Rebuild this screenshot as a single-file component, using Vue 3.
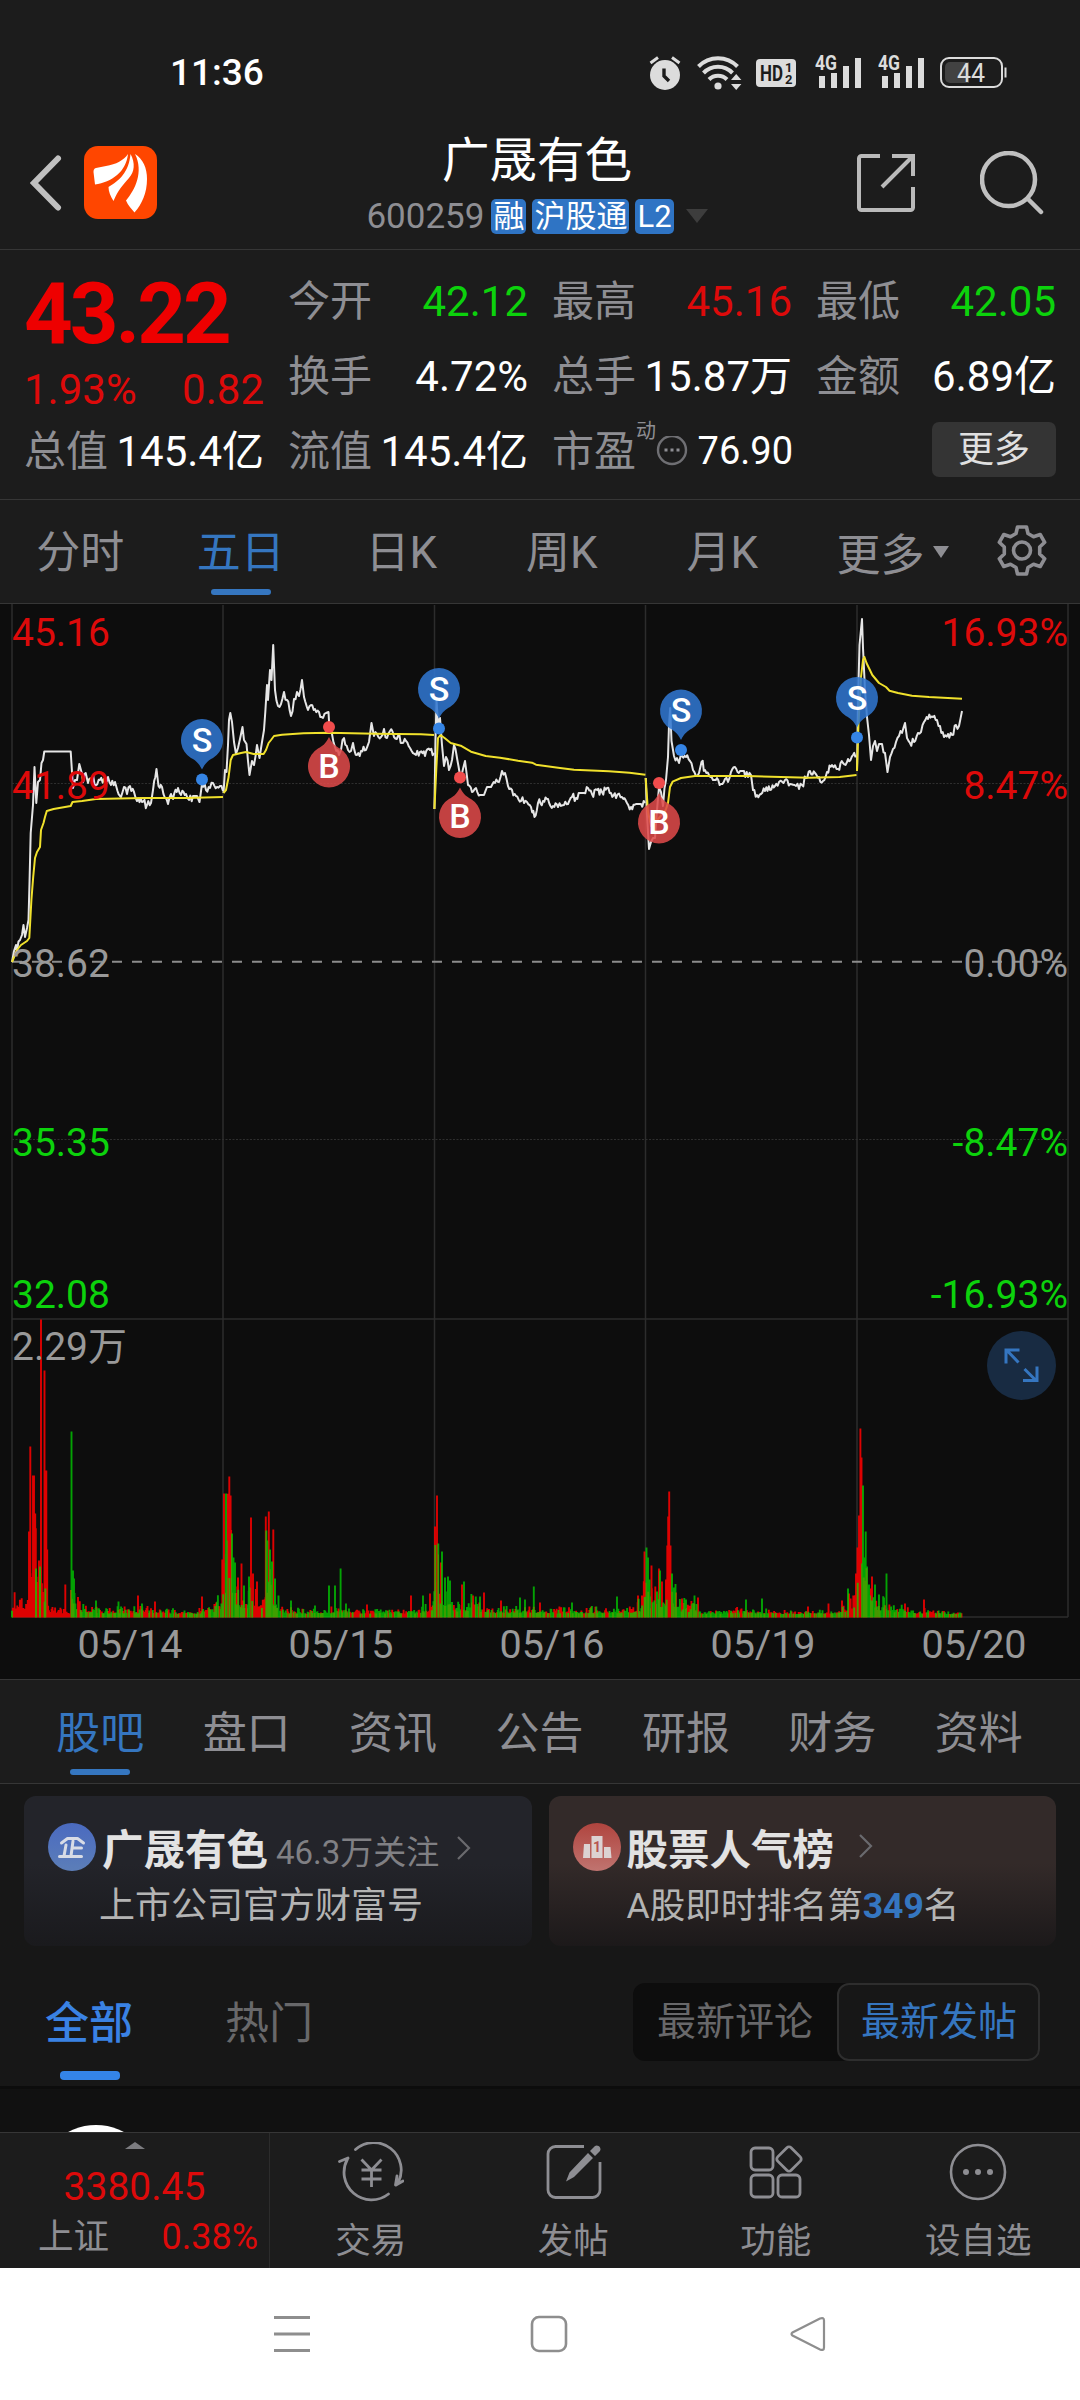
<script setup>
const quotes = [
  { label: '今开', value: '42.12', tone: 'down' },
  { label: '最高', value: '45.16', tone: 'up' },
  { label: '最低', value: '42.05', tone: 'down' },
  { label: '换手', value: '4.72%' },
  { label: '总手', value: '15.87万' },
  { label: '金额', value: '6.89亿' },
  { label: '总值', value: '145.4亿' },
  { label: '流值', value: '145.4亿' },
]

const periods = ['分时', '五日', '日K', '周K', '月K']
const sections = ['股吧', '盘口', '资讯', '公告', '研报', '财务', '资料']

// chart geometry
const left = 12
const right = 1068
const volBase = 1617
const dayLines = [223, 434.5, 645.5, 857]

const priceLabels = [
  { y: 646, price: '45.16', pct: '16.93%', tone: 'up' },
  { y: 799, price: '41.89', pct: '8.47%', tone: 'up' },
  { y: 977, price: '38.62', pct: '0.00%', tone: 'flat' },
  { y: 1156, price: '35.35', pct: '-8.47%', tone: 'down' },
  { y: 1308, price: '32.08', pct: '-16.93%', tone: 'down' },
]

const dates = [
  { x: 130, text: '05/14' },
  { x: 341, text: '05/15' },
  { x: 552, text: '05/16' },
  { x: 763, text: '05/19' },
  { x: 974, text: '05/20' },
]

const marks = [
  { x: 202, y: 779.5, type: 'S' },
  { x: 329, y: 727, type: 'B' },
  { x: 439, y: 728.5, type: 'S' },
  { x: 460, y: 777.5, type: 'B' },
  { x: 681, y: 750, type: 'S' },
  { x: 659, y: 783, type: 'B' },
  { x: 857, y: 737.5, type: 'S' },
]

function createRandom(seed) {
  let s = seed
  return () => {
    s = (s * 16807) % 2147483647
    return s / 2147483647
  }
}

const priceDays = [
  [
    12, 962, 14, 951, 16, 945, 17, 951, 20, 940, 22, 935, 23.5, 925, 25, 937, 27, 928, 28.5, 920, 29.5, 883,
    30.7, 833, 33, 805, 34.5, 767, 36.3, 803, 38, 782, 40, 780, 41.5, 763, 43, 760, 44.3, 751.5, 70.7, 751.5,
    73, 788, 75, 780, 77, 780, 79.3, 764, 81.5, 772, 83, 782, 85.7, 773, 88, 783, 92, 778, 96, 785, 100, 780,
    108, 777, 111, 785, 115, 782, 117.5, 791, 121, 797, 124, 787, 127, 794, 130, 786, 134, 792, 137, 801,
    142, 802, 147, 805, 151, 803, 153, 790, 156.5, 769, 158.5, 786, 162, 787, 165, 798, 168, 804, 171, 794,
    173, 799, 178, 788, 181, 795, 186, 794, 189, 800, 193, 796, 197, 796, 199.5, 802, 202, 784, 206, 790,
    210, 788, 213, 783, 217, 787, 223, 791,
  ],
  [
    223.5, 793, 225, 770, 226.5, 772, 228, 745, 229, 720, 230.3, 713, 232, 722, 234, 742, 236, 754, 238, 748,
    240, 739, 242.5, 727, 244, 740, 246.5, 744, 249.5, 775, 252, 761, 254, 765, 257, 745, 259.5, 758, 262, 742,
    264, 730, 265.3, 712, 267, 685, 268, 700, 270, 670, 271.5, 680, 273.2, 645, 275, 690, 278, 706, 281, 704,
    284, 692, 287, 700, 291, 716, 294, 699, 297, 692, 299, 696, 302, 680, 304, 697, 308, 710, 311, 705, 315, 709,
    319, 712, 323, 718, 326, 713, 328.5, 712, 329.5, 730, 332, 734, 335, 747, 339, 755, 341, 750, 344, 738,
    348, 750, 351, 751, 353, 743, 357, 755, 361, 751, 366, 750, 369, 742, 371.5, 723, 374, 736, 377, 734,
    381, 737, 384, 729, 387, 738, 390, 731, 394, 737, 398, 736, 402, 743, 406, 741, 410, 748, 416, 755, 420, 752,
    425, 756, 430, 750, 434, 753,
  ],
  [
    434.4, 809, 435.5, 740, 436.5, 700, 438, 724, 440, 718, 442, 745, 444, 766, 446, 757, 449, 770, 452, 760,
    454, 745, 457, 758, 460, 775, 463, 769, 465, 761, 468, 785, 472, 792, 476, 788, 480, 795, 484, 795, 487, 787,
    491, 787, 495, 783, 499, 782, 502, 771, 505, 773, 508, 786, 512, 790, 516, 796, 521, 801, 527, 802, 531, 807,
    534.5, 817, 538, 803, 543, 801, 548, 799, 553, 806, 558, 807, 564, 805, 568, 804, 572, 797, 576, 798, 580, 793,
    584, 793, 588, 788, 592, 794, 597, 790, 602, 792, 607, 788, 611, 793, 616, 798, 622, 797, 627, 803, 631, 807,
    636, 804, 641, 804, 645, 803,
  ],
  [
    645.7, 778, 647, 815, 649, 849, 651, 842, 653, 838, 655, 838, 657, 810, 659, 787, 661, 792, 663, 806,
    664.5, 788, 666, 780, 668, 757, 669, 725, 670.2, 708, 671.5, 741, 674, 756, 677, 758, 679, 763, 682, 756,
    686, 757, 690, 761, 693, 770, 696, 776, 699, 773, 701.5, 762, 705, 770, 709, 775, 713, 780, 717, 778,
    721, 784, 725, 779, 728, 782, 731, 772, 735, 767, 740, 771, 744, 771, 748, 777, 751, 775, 753, 790, 757, 795,
    761, 794, 765, 791, 770, 790, 775, 786, 779, 782, 785, 780, 790, 784, 796, 786, 802, 785, 806, 778, 810, 771,
    815, 773, 819, 777, 823, 781, 827, 772, 832, 765, 838, 769, 843, 763, 848, 759, 853, 755, 856.5, 756,
  ],
  [
    857, 771, 858.3, 690, 859.5, 645, 862, 619, 863, 648, 865, 690, 867, 717, 869, 735, 871, 760, 873, 746,
    875, 741, 877, 751, 879, 744, 882, 744, 885, 753, 887.5, 772, 890, 757, 893, 749, 896, 742, 899, 736,
    902, 733, 905, 723, 907, 738, 910, 743, 914, 742, 918, 733, 921, 732, 924, 722, 928, 719, 933, 717, 937, 720,
    940, 726, 944, 737, 948, 734, 952, 735, 956, 725, 959, 726, 962, 711,
  ],
]

const averageDays = [
  [
    12, 962, 17, 950, 21, 945, 27, 941, 29.3, 938, 31.4, 900, 33.2, 877, 35, 858, 37, 852, 40, 847, 41, 830,
    43.5, 823, 45, 817, 46.8, 811, 53.6, 809, 70.7, 806, 72.5, 802, 82, 801, 96, 799, 143, 798, 186, 798, 223, 797,
  ],
  [
    223.5, 793, 226, 790, 228.6, 777, 230.7, 760, 233, 755, 241, 753, 246, 752, 253.6, 754, 263.6, 754, 266, 750,
    268.6, 743, 271, 740, 274, 736, 282, 734.7, 303.6, 733.3, 328.6, 732.7, 375, 733.7, 421, 734.3, 434, 735,
  ],
  [
    434.4, 809, 436.4, 767, 438, 738, 440.4, 735, 444.6, 738, 450.7, 743, 460.7, 745.7, 471, 751.7, 485.7, 756,
    500, 757.7, 518, 760.7, 532, 762.7, 536, 764.7, 560, 768, 574, 769.7, 609, 771.3, 629.5, 772.7, 645.4, 774.7,
  ],
  [
    645.7, 778, 648, 812, 651, 826, 659, 818, 665.7, 810, 668, 803, 670, 787, 672.6, 781.7, 681, 778, 695, 776,
    746.6, 776, 781, 777, 808.6, 777.7, 839.6, 777, 856.5, 775,
  ],
  [
    857, 771, 858.5, 723, 861, 677, 863, 660, 864.4, 657, 866.5, 663, 872.3, 675, 879, 683, 886, 687, 889.5, 690.7,
    898, 693, 912, 695.7, 929, 697, 962, 698.7,
  ],
]

// puts a tick every couple of pixels between two known points
function tickLine(flat, rand) {
  const out = []
  for (let i = 0; i < flat.length; i += 2) {
    const [x, y, nx, ny] = flat.slice(i, i + 4)
    out.push(`${x},${y}`)
    if (nx === undefined || y === ny || nx - x < 2.6) continue
    const n = Math.round((nx - x) / 1.4)
    for (let k = 1; k < n; k++) {
      const t = k / n
      const ty = y + (ny - y) * t + (rand() - 0.5) * 8
      out.push(`${(x + (nx - x) * t).toFixed(1)},${ty.toFixed(1)}`)
    }
  }
  return out.join(' ')
}

const noise = createRandom(77)
const priceLines = priceDays.map((d) => tickLine(d, noise))
const averageLines = averageDays.map((d) => d.join(' '))

// usual bar height by x: [x, height, share of red]
const volumeShape = [
  [12, 18, 0.8], [27, 22, 0.8], [29, 70, 1], [36, 85, 0.9], [38, 30, 0.7], [47, 70, 1], [48.5, 14, 1], [60, 6, 1], [70, 5, 0.9],
  [72, 40, 0.3], [76, 26, 0.5], [82, 14, 0.4], [92, 11, 0.5], [100, 6, 0.5], [135, 9, 0.5], [150, 7, 0.6], [170, 6, 0.5],
  [195, 4, 0.5], [203, 9, 0.5], [214, 12, 0.5], [221, 20, 0.5], [223, 100, 0.5], [230, 105, 0.6], [234, 60, 0.3], [240, 34, 0.6],
  [256, 28, 0.6], [258, 14, 0.8], [264, 26, 0.9], [266, 80, 0.5], [273, 50, 0.6], [277, 22, 0.4], [282, 9, 0.5], [300, 6, 0.4],
  [328, 5, 0.4], [337, 13, 0.3], [344, 6, 0.6], [375, 6, 0.5], [410, 5, 0.5], [425, 12, 0.5], [433, 15, 0.5], [435, 75, 0.7],
  [441, 50, 0.4], [446, 35, 0.4], [453, 17, 0.4], [475, 17, 0.5], [490, 8, 0.5], [520, 9, 0.5], [545, 8, 0.6], [570, 8, 0.6],
  [595, 7, 0.4], [615, 6, 0.5], [630, 11, 0.4], [643, 14, 0.5], [645, 60, 0.5], [650, 30, 0.4], [656, 26, 0.6], [665, 32, 0.6],
  [669, 75, 1], [673, 32, 0.3], [680, 16, 0.6], [695, 14, 0.4], [702, 4, 0.4], [735, 7, 0.5], [765, 6, 0.5], [790, 4, 0.5],
  [810, 5, 0.5], [835, 7, 0.4], [843, 14, 0.6], [853, 18, 0.8], [858, 85, 1], [862, 110, 0.6], [867, 48, 0.1], [874, 25, 0.5],
  [886, 14, 0.3], [900, 9, 0.5], [925, 6, 0.6], [940, 5, 0.3], [950, 3, 0.4], [963, 5, 1],
]

const redSpikes = [
  29, 86, 30.3, 171, 33, 142, 34, 142, 35.2, 104, 39, 57, 41, 298, 44.5, 247, 46.3, 147, 47.2, 68, 65.3, 33, 138, 22, 155, 16,
  202, 21, 224, 124, 227.5, 97, 229.3, 141, 230.6, 122, 238, 40, 241.5, 54, 251, 100, 253, 44, 257, 36, 265.8, 101, 268.8, 106,
  273.3, 88, 367, 13, 411, 22, 430, 24, 435, 91, 437, 122, 441, 55, 462, 33, 473, 22, 484, 25, 501, 17, 540, 15, 638, 22, 642, 22,
  644.5, 66, 651.5, 52, 659, 49, 662, 36, 666, 38, 667.3, 72, 668.2, 101, 669.2, 126, 670.5, 72, 676, 25, 682, 19, 698, 20,
  808, 11, 828.5, 14, 842, 17, 849, 24, 856, 44, 857.5, 70, 859, 102, 860.4, 189, 861.5, 160, 872, 41, 905, 14, 924, 18,
]
const greenSpikes = [
  36, 49, 40, 51, 71.5, 186, 73, 47, 74, 39, 96, 17, 118.5, 16, 142, 14, 226, 124, 232, 84, 233.5, 60, 235, 55, 244, 32, 249, 41,
  267.3, 77, 270, 68, 272, 56, 275, 39, 278.5, 22, 291, 17, 315, 12, 329, 32, 335, 32, 340.6, 49, 346, 14, 423, 22, 438.3, 74,
  442, 66, 445, 40, 448, 41, 450, 37, 464, 36, 480, 21, 520, 20, 525, 18, 533.8, 31, 572, 15, 617, 21, 646.5, 70, 648, 60,
  649.5, 38, 660, 47, 672, 44, 674, 30, 686, 18, 694.5, 22, 746, 18, 762, 19, 848, 29, 863, 132, 864.2, 60, 865.7, 86, 867, 51,
  869, 33, 875, 33, 879, 23, 884, 20, 886.5, 44,
]

function bar(x, h) {
  return `M${x.toFixed(1)} ${volBase + 0.5}v${-h.toFixed(1)}`
}

function buildVolume() {
  const rand = createRandom(4211)
  let red = ''
  let green = ''
  for (let x = left; x < 962; x += 0.88) {
    const i = Math.max(1, volumeShape.findIndex((p) => p[0] > x))
    const a = volumeShape[i - 1]
    const b = volumeShape[i]
    const t = (x - a[0]) / (b[0] - a[0])
    const h = 2.5 + (a[1] + (b[1] - a[1]) * t) * (0.2 + 0.85 * rand() * rand() * 1.3)
    if (rand() < a[2]) red += bar(x, h)
    else green += bar(x, h)
  }
  for (let i = 0; i < redSpikes.length; i += 2) red += bar(redSpikes[i], redSpikes[i + 1])
  for (let i = 0; i < greenSpikes.length; i += 2) green += bar(greenSpikes[i], greenSpikes[i + 1])
  return { red, green }
}

const volume = buildVolume()
</script>

<template>
  <div class="app">
    <header class="top">
      <div class="status-bar">
        <span class="clock">11:36</span>
        <div class="status-icons">
          <svg class="alarm" width="32" height="36" viewBox="0 0 32 36">
            <circle cx="16" cy="20" r="15" fill="#dcdcdc" />
            <path d="M1.500 8L9 2.500M30.500 8L23 2.500" stroke="#dcdcdc" stroke-width="3" />
            <path d="M15 13.500V21l5 5" fill="none" stroke="#1c1c1c" stroke-width="3.400" />
          </svg>
          <svg class="wifi" width="46" height="36" viewBox="0 0 46 36">
            <g fill="none" stroke="#dcdcdc" stroke-width="4">
              <path d="M1.500 11.500a27 27 0 0 1 39 0" />
              <path d="M6.500 18a20 20 0 0 1 29 0" />
              <path d="M12 24.500a12.500 12.500 0 0 1 18 0" />
            </g>
            <circle cx="21" cy="31" r="3.600" fill="#dcdcdc" />
            <path d="M34 25l5.200-6 5.200 6zM34 29l5.200 6 5.200-6z" fill="#dcdcdc" />
          </svg>
          <svg class="hd" width="40" height="28" viewBox="0 0 40 28">
            <rect width="40" height="28" rx="4" fill="#dcdcdc" />
            <text x="4" y="22" class="hd-text" textLength="23" lengthAdjust="spacingAndGlyphs">HD</text>
            <text x="29" y="13" class="hd-num">1</text>
            <text x="29" y="25" class="hd-num">2</text>
          </svg>
          <svg v-for="n in 2" :key="n" class="signal" width="47" height="40" viewBox="0 -7 47 40">
            <text x="0" y="14.500" class="net-text" textLength="22" lengthAdjust="spacingAndGlyphs">4G</text>
            <path d="M4 21h6v12h-6zM16 18h6v15h-6zM28 11h6v22h-6zM40 3h6v30h-6z" fill="#dcdcdc" />
          </svg>
          <svg class="battery" width="68" height="32" viewBox="0 0 68 32">
            <rect x="1" y="1" width="61" height="29" rx="8" fill="none" stroke="#dcdcdc" stroke-width="2" />
            <path d="M10 5h19v21H10a5 5 0 0 1-5-5V10a5 5 0 0 1 5-5z" fill="#424242" />
            <path d="M65.500 10.500v10" stroke="#dcdcdc" stroke-width="2" />
            <text x="31" y="24.500" text-anchor="middle" class="battery-text">44</text>
          </svg>
        </div>
      </div>

      <div class="nav">
        <div class="nav-side">
          <svg width="32" height="56" viewBox="0 0 32 56">
            <path d="M28 3.500L4 28l24 24.500" fill="none" stroke="#c0c0c0" stroke-width="6" stroke-linecap="round" />
          </svg>
          <svg class="logo" width="73" height="73" viewBox="0 0 73 73">
            <rect width="73" height="73" rx="14" fill="#ff4600" />
            <path d="M44 8C40 14 32 18.500 22 20L12 22c-2 .5-2.500 2-2.500 4l1.500 12.500C28 36 42 26 44 8z" fill="#fff" />
            <path d="M46.500 8c5 9 4 18-1.500 24C39 39 34 44 29.500 55c-3-5-5-9-5-14C35 35 45 26 46.500 8z" fill="#fff" />
            <path d="M51 8c8 5 12 14 12 25 0 14-5 25-12.500 33.500-3-4-6.500-7-8.500-12C51 44 60 26 51 8z" fill="#fff" />
          </svg>
        </div>
        <div class="nav-title">
          <h1>广晟有色</h1>
          <div class="nav-sub">
            <span class="code">600259</span>
            <span class="badge">融</span>
            <span class="badge">沪股通</span>
            <span class="badge">L2</span>
            <span class="drop" />
          </div>
        </div>
        <div class="nav-side nav-right">
          <svg width="58" height="58" viewBox="0 0 58 58">
            <g fill="none" stroke="#bababa" stroke-width="4">
              <path d="M23 2H4.500A2.500 2.500 0 0 0 2 4.500v49A2.500 2.500 0 0 0 4.500 56h49a2.500 2.500 0 0 0 2.500-2.500V33" />
              <path d="M35 2h21v20M55 3L25 33" />
            </g>
          </svg>
          <svg width="64" height="64" viewBox="0 0 64 64">
            <circle cx="28.500" cy="28.500" r="26.500" fill="none" stroke="#c0c0c0" stroke-width="4.500" />
            <path d="M48 48l13 13" stroke="#c0c0c0" stroke-width="4.500" stroke-linecap="round" />
          </svg>
        </div>
      </div>
    </header>

    <section class="quote">
      <div class="latest">
        <strong>43.22</strong>
        <div class="change"><span>1.93%</span><span>0.82</span></div>
      </div>
      <div v-for="(q, i) in quotes" :key="i" class="cell">
        <span class="cell-label">{{ q.label }}</span>
        <span class="cell-value" :class="q.tone">{{ q.value }}</span>
      </div>
      <div class="cell pe">
        <span class="cell-label">市盈</span>
        <span class="pe-type">动</span>
        <svg width="32" height="32" viewBox="0 0 32 32">
          <circle cx="16" cy="14" r="14" fill="none" stroke="#6f6f73" stroke-width="2.400" />
          <path d="M8.500 12.500h3v3h-3zM14.500 12.500h3v3h-3zM20.500 12.500h3v3h-3z" fill="#8e8e93" />
        </svg>
        <span class="cell-value small">76.90</span>
      </div>
      <div class="cell more-cell"><button class="more-btn" type="button">更多</button></div>
    </section>

    <nav class="periods">
      <span v-for="p in periods" :key="p" class="tab" :class="{ active: p === '五日' }">{{ p }}</span>
      <span class="tab-more">更多<i class="caret" /></span>
      <svg class="gear" width="54" height="54" viewBox="0 0 54 54">
        <g fill="none" stroke="#8e8e93" stroke-width="3.600" stroke-linejoin="round">
          <path d="M22.500 3h9l1.500 6.500 5.500 3.200 6.700-2.200 4.500 7.800-5 4.700v7l5 4.700-4.500 7.800-6.700-2.200-5.500 3.200-1.500 6.500h-9l-1.500-6.500-5.500-3.200-6.700 2.200-4.500-7.800 5-4.700v-7l-5-4.700 4.500-7.800 6.700 2.200L21 9.500z" />
          <circle cx="27" cy="26.500" r="8.500" />
        </g>
      </svg>
    </nav>

    <section class="chart">
      <svg width="1080" height="1075" viewBox="0 604 1080 1075">
        <g stroke="#2c2c2c" stroke-width="1.500">
          <path :d="`M${left} 604V${volBase}M${right} 604V${volBase}`" />
          <path v-for="x in dayLines" :key="x" :d="`M${x} 605V${volBase}`" />
          <path :d="`M${left} 1319H${right}M${left} ${volBase}H${right}`" />
        </g>
        <path :d="`M${left} 783.500H${right}M${left} 1139.500H${right}`" stroke="#2e2e2e" stroke-dasharray="2 1.500" />
        <path d="M12 961.700H1062" stroke="#8c8c8c" stroke-width="2" stroke-dasharray="10 10" />

        <path :d="volume.red" class="bars" stroke="#f00000" />
        <path :d="volume.green" class="bars green" stroke="#00dc00" />

        <polyline v-for="(p, i) in priceLines" :key="'p' + i" :points="p" class="line" stroke="#e6e6e6" />
        <polyline v-for="(p, i) in averageLines" :key="'a' + i" :points="p" class="line" stroke="#f0e12c" />

        <g v-for="l in priceLabels" :key="l.price" class="axis" :class="l.tone">
          <text x="12" :y="l.y">{{ l.price }}</text>
          <text x="1068" :y="l.y" text-anchor="end">{{ l.pct }}</text>
        </g>
        <text x="12" y="1360" class="axis flat">2.29万</text>
        <text v-for="d in dates" :key="d.text" :x="d.x" y="1658" text-anchor="middle" class="axis date">{{ d.text }}</text>

        <g v-for="(m, i) in marks" :key="'m' + i" :transform="`translate(${m.x} ${m.y})`">
          <circle r="6" :fill="m.type === 'S' ? '#3584e4' : '#f04c4c'" />
          <path
            :class="m.type === 'S' ? 'pin-s' : 'pin-b'"
            :transform="m.type === 'S' ? '' : 'scale(1 -1)'"
            d="M0-10C-3.500-17-7-19.500-11-21.500A21 21 0 1 1 11-21.500C7-19.500 3.500-17 0-10z"
          />
          <text :y="m.type === 'S' ? -28 : 50.500" text-anchor="middle" class="pin-text">{{ m.type }}</text>
        </g>

        <g transform="translate(1021.500 1365.500)">
          <circle r="34.500" fill="#182b42" />
          <path d="M-3-3L-14.500-15M-2-15.500h-13.500v13.500M3 3.500l12 12M1.500 15h14v-14" fill="none" stroke="#3576c0" stroke-width="3" />
        </g>
      </svg>
    </section>

    <nav class="sections">
      <span v-for="s in sections" :key="s" class="tab" :class="{ active: s === '股吧' }">{{ s }}</span>
    </nav>

    <section class="forum">
      <div class="cards">
        <div class="card card-blue">
          <div class="card-head">
            <svg width="48" height="48" viewBox="0 0 48 48">
              <defs>
                <linearGradient id="blueDisc" x1="0" y1="0" x2="0" y2="1">
                  <stop offset="0" stop-color="#4a6ac0" />
                  <stop offset="1" stop-color="#5c7eb8" />
                </linearGradient>
              </defs>
              <circle cx="24" cy="24" r="24" fill="url(#blueDisc)" />
              <path d="M13.500 20l6-4.500h10l6 4.500M18 22l-2 11M25 18l-2 15M25 25h8.500M11.500 33.500h22" fill="none" stroke="#d8dce6" stroke-width="3" stroke-linecap="round" stroke-linejoin="round" />
            </svg>
            <b>广晟有色</b>
            <span class="fans">46.3万关注</span>
            <svg class="arrow" width="16" height="26" viewBox="0 0 16 26">
              <path d="M2 2l11 11L2 24" fill="none" stroke="#6a6a6e" stroke-width="2.200" />
            </svg>
          </div>
          <p>上市公司官方财富号</p>
        </div>
        <div class="card card-red">
          <div class="card-head">
            <svg width="48" height="48" viewBox="0 0 48 48">
              <defs>
                <linearGradient id="redDisc" x1="0" y1="0" x2="0" y2="1">
                  <stop offset="0" stop-color="#b0443e" />
                  <stop offset="1" stop-color="#c07470" />
                </linearGradient>
              </defs>
              <circle cx="24" cy="24" r="24" fill="url(#redDisc)" />
              <path d="M11 21h6v14h-7zM18.500 13h11v22h-11zM31 24h6.500l1 11H31z" fill="#dcd2d2" />
              <text x="24" y="29" text-anchor="middle" class="rank-num">1</text>
            </svg>
            <b>股票人气榜</b>
            <svg class="arrow rank-arrow" width="16" height="26" viewBox="0 0 16 26">
              <path d="M2 2l11 11L2 24" fill="none" stroke="#6a6a6e" stroke-width="2.200" />
            </svg>
          </div>
          <p class="rank">A股即时排名第<em>349</em>名</p>
        </div>
      </div>

      <div class="filter">
        <span class="filter-tab active">全部</span>
        <span class="filter-tab">热门</span>
        <div class="switch">
          <span>最新评论</span>
          <span class="on">最新发帖</span>
        </div>
      </div>
    </section>

    <section class="posts"><div class="avatar" /></section>

    <footer class="toolbar">
      <div class="index">
        <i class="up-caret" />
        <span class="index-value">3380.45</span>
        <div class="index-row"><span>上证</span><span class="up">0.38%</span></div>
      </div>
      <div class="tool">
        <svg width="66" height="60" viewBox="0 0 66 60">
          <g fill="none" stroke="#8e8e93" stroke-width="2.800" stroke-linecap="round" stroke-linejoin="round">
            <path d="M17.500 7.500A27.500 27.500 0 0 1 60 41M60 41l-2.500 2 1.500-9M58 43l7-4" />
            <path d="M50.500 52A27.500 27.500 0 0 1 9.500 17M1.500 19.500L10 16" />
            <path d="M23.500 17.500L33.500 28l10-10.500M23.500 28h20M23.500 37h20M33.500 28v17" stroke-linecap="butt" />
          </g>
        </svg>
        <span>交易</span>
      </div>
      <div class="tool">
        <svg width="60" height="60" viewBox="0 0 60 60">
          <path d="M41 4.500H12.500A7.500 7.500 0 0 0 5 12v36a7.500 7.500 0 0 0 7.500 7.500h37A7.500 7.500 0 0 0 57 48V20" fill="none" stroke="#8e8e93" stroke-width="2.800" />
          <path d="M45 11l5 5-19 19-8 4.500 3.500-9zM47 9l5-5c3-2 7 2 5 5l-5 5z" fill="#8e8e93" />
        </svg>
        <span>发帖</span>
      </div>
      <div class="tool">
        <svg width="60" height="60" viewBox="0 0 60 60">
          <g fill="none" stroke="#8e8e93" stroke-width="2.800">
            <rect x="5" y="6" width="22" height="22" rx="4" />
            <rect x="5" y="33" width="22" height="22" rx="4" />
            <rect x="32" y="33" width="22" height="22" rx="4" />
            <rect x="33.500" y="7.500" width="19" height="19" rx="3" transform="rotate(45 43 17)" />
          </g>
        </svg>
        <span>功能</span>
      </div>
      <div class="tool">
        <svg width="60" height="60" viewBox="0 0 60 60">
          <circle cx="30" cy="30" r="27" fill="none" stroke="#8e8e93" stroke-width="2.600" />
          <g fill="#8e8e93">
            <circle cx="18" cy="30" r="3" />
            <circle cx="30" cy="30" r="3" />
            <circle cx="42" cy="30" r="3" />
          </g>
        </svg>
        <span>设自选</span>
      </div>
    </footer>

    <div class="system-nav">
      <svg width="36" height="38" viewBox="0 0 36 38">
        <path d="M0 2.500h36M0 19h36M0 35.500h36" stroke="#8e8e8e" stroke-width="3" />
      </svg>
      <svg width="38" height="38" viewBox="0 0 38 38">
        <rect x="2" y="2" width="34" height="34" rx="7" fill="none" stroke="#8e8e8e" stroke-width="2.600" />
      </svg>
      <svg width="38" height="38" viewBox="0 0 38 38">
        <path d="M31 3.500L3.500 17.500q-2 1.500 0 3L31 34.500q4 1.500 4-2v-27q0-3.500-4-2z" fill="none" stroke="#8e8e8e" stroke-width="2.200" />
      </svg>
    </div>
  </div>
</template>

<style>
body {
  background: #0d0d0d;
}
</style>

<style scoped>
.app {
  width: 1080px;
  height: 2400px;
  overflow: hidden;
  display: flex;
  flex-direction: column;
  background: #0d0d0d;
  color: #8e8e93;
  font-family: Roboto, 'Noto Sans CJK SC', sans-serif;
}

svg {
  display: block;
  flex-shrink: 0;
}

.up {
  color: #ea0c0c;
}

.down {
  color: #0cd20c;
}

/* header */
.top {
  box-sizing: border-box;
  height: 250px;
  background: #1c1c1c;
  border-bottom: 1px solid #363636;
}

.status-bar {
  box-sizing: border-box;
  display: flex;
  justify-content: space-between;
  align-items: center;
  height: 116px;
  padding: 29px 72px 0 170px;
}

.clock {
  color: #fff;
  font-size: 37px;
  font-weight: 500;
}

.status-icons {
  display: flex;
  align-items: center;
}

.wifi {
  margin-left: 16px;
}

.hd {
  margin-left: 13px;
}

.signal {
  margin-left: 19px;
  margin-top: -9px;
}

.signal + .signal {
  margin-left: 16px;
}

.battery {
  margin-left: 15px;
}

.hd-text {
  font-size: 22px;
  font-weight: 700;
  fill: #1c1c1c;
}

.hd-num {
  font-size: 13px;
  font-weight: 700;
  fill: #1c1c1c;
}

.net-text {
  font-size: 20px;
  font-weight: 700;
  fill: #dcdcdc;
}

.battery-text {
  font-size: 25px;
  fill: #dcdcdc;
}

.nav {
  display: flex;
  align-items: center;
  justify-content: space-between;
  height: 133px;
  padding: 0 36px 0 30px;
}

.nav-side {
  display: flex;
  align-items: center;
  width: 190px;
}

.logo {
  margin-left: 22px;
}

.nav-right {
  justify-content: flex-end;
  gap: 65px;
}

.nav-title {
  display: flex;
  flex-direction: column;
  align-items: center;
}

h1 {
  margin: 0;
  color: #fff;
  font-size: 47.500px;
  font-weight: 400;
  line-height: 60px;
}

.nav-sub {
  display: flex;
  align-items: center;
  height: 36px;
  margin-top: 7px;
}

.code {
  font-size: 35px;
  letter-spacing: 0;
  margin-right: 7px;
}

.badge {
  height: 35px;
  margin-right: 6px;
  padding: 0 2px;
  border-radius: 5px;
  background: #2f74c4;
  color: #fff;
  font-size: 31px;
  line-height: 35px;
}

.drop {
  margin-left: 6px;
  border: 11px solid transparent;
  border-top: 14px solid #3d3d3d;
  border-bottom: 0;
}

/* quote */
.quote {
  box-sizing: border-box;
  height: 250px;
  display: grid;
  grid-template-columns: repeat(4, 1fr);
  grid-auto-rows: 75px;
  column-gap: 24px;
  padding: 14px 24px 0;
  background: #1c1c1c;
  border-bottom: 1px solid #363636;
}

.latest {
  grid-row: span 2;
  color: #ee0000;
}

.latest strong {
  display: block;
  padding-top: 2px;
  font-size: 85px;
  line-height: 97px;
  letter-spacing: -3px;
}

.change {
  display: flex;
  justify-content: space-between;
  color: #dd0a0a;
  font-size: 42px;
  line-height: 53px;
}

.cell {
  display: flex;
  align-items: center;
  justify-content: space-between;
  font-size: 42px;
  line-height: 75px;
  white-space: nowrap;
}

.cell-value {
  color: #fff;
}

.cell-value.up {
  color: #dd0a0a;
}

.cell-value.down {
  color: #0cd20c;
}

.pe {
  justify-content: flex-start;
}

.pe-type {
  align-self: flex-start;
  font-size: 20px;
  line-height: 34px;
}

.cell-value.small {
  margin-left: auto;
  margin-right: -1px;
  font-size: 38px;
}

.more-cell {
  justify-content: flex-end;
}

.more-btn {
  width: 124px;
  height: 55px;
  margin-top: -4px;
  padding: 0;
  border: 0;
  border-radius: 7px;
  background: #343434;
  color: #e0e0e0;
  font: inherit;
  font-size: 36px;
  line-height: 54px;
}

/* tabs */
.periods,
.sections {
  box-sizing: border-box;
  display: flex;
  height: 104px;
  background: #1c1c1c;
  border-bottom: 1px solid #363636;
}

.tab {
  position: relative;
  width: 160.500px;
  text-align: center;
  font-size: 44px;
  line-height: 107px;
}

.tab.active {
  color: #3576c0;
}

.tab.active::after {
  content: '';
  position: absolute;
  left: 50%;
  bottom: 8px;
  width: 60px;
  height: 6px;
  margin-left: -30px;
  border-radius: 3px;
  background: #3576c0;
}

.tab-more {
  display: flex;
  align-items: center;
  margin-left: 34px;
  font-size: 44px;
}

.caret {
  margin-left: 8px;
  border: 8px solid transparent;
  border-top: 12px solid #8e8e93;
  border-bottom: 0;
}

.gear {
  margin: 24px 0 0 46px;
}

.sections {
  height: 105px;
  padding: 0 28px 0 27px;
  border-top: 1px solid #363636;
}

.sections .tab {
  flex: 1;
  width: auto;
  line-height: 109px;
}

/* chart */
.chart {
  height: 1075px;
  background: #0d0d0d;
}

.bars {
  fill: none;
  stroke-width: 1.900;
  stroke-opacity: 0.92;
}

.bars.green {
  stroke-opacity: 0.72;
}

.line {
  fill: none;
  stroke-width: 2;
  stroke-linejoin: round;
}

.axis {
  font-size: 39px;
}

.axis.date {
  font-size: 39.500px;
  fill: #999;
}

.axis.up {
  fill: #dd0a0a;
}

.axis.down {
  fill: #0cd20c;
}

.axis.flat {
  fill: #999;
}

.pin-s {
  fill: rgba(48, 118, 208, 0.87);
}

.pin-b {
  fill: rgba(222, 74, 74, 0.87);
}

.pin-text {
  font-size: 34px;
  font-weight: 500;
  fill: #fff;
}

/* forum */
.forum {
  box-sizing: border-box;
  height: 302px;
  padding-top: 12px;
  background: #171717;
}

.cards {
  display: grid;
  grid-template-columns: 1fr 1fr;
  gap: 17px;
  padding: 0 24px;
}

.card {
  box-sizing: border-box;
  height: 150px;
  padding: 25px 24px 0;
  border-radius: 12px;
}

.card-blue {
  background: linear-gradient(#23242a 45%, #1a1a1d);
}

.card-red {
  background: linear-gradient(#332a29 45%, #1c191a);
}

.card-head {
  display: flex;
  align-items: center;
  height: 52px;
}

.card-head b {
  margin-left: 6px;
  color: #e2e2e2;
  font-size: 41.500px;
  font-weight: 700;
}

.fans {
  margin: 5px 0 0 8px;
  color: #808084;
  font-size: 33px;
}

.arrow {
  margin: 2px 0 0 17px;
}

.rank-arrow {
  margin: -2px 0 0 24px;
}

.rank-num {
  font-size: 14px;
  font-weight: 700;
  fill: #b85550;
}

.card p {
  margin: 7px 0 0 51px;
  color: #b4b4b4;
  font-size: 36px;
  line-height: 52px;
}

.card p.rank {
  margin-left: 54px;
  font-size: 35.500px;
}

.card em {
  color: #3576c0;
  font-style: normal;
  font-weight: 700;
}

.filter {
  display: flex;
  height: 140px;
  padding: 0 40px 0 45px;
}

.filter-tab {
  position: relative;
  margin-right: 92px;
  color: #68686a;
  font-size: 44px;
  line-height: 156px;
}

.filter-tab.active {
  color: #3a82e4;
  font-weight: 500;
}

.filter-tab.active::after {
  content: '';
  position: absolute;
  left: 15px;
  top: 125px;
  width: 60px;
  height: 9px;
  border-radius: 4px;
  background: #3484e8;
}

.switch {
  display: flex;
  height: 78px;
  margin: 37px 0 0 auto;
  border-radius: 12px;
  background: #0d0d0d;
  color: #68686a;
  font-size: 39px;
  line-height: 79px;
}

.switch span {
  padding: 0 24px;
}

.switch .on {
  padding: 0 21px 0 22px;
  border: 2px solid #2e2e2e;
  border-radius: 12px;
  background: #171717;
  color: #3576c0;
  line-height: 75px;
}

.posts {
  box-sizing: border-box;
  height: 46px;
  overflow: hidden;
  padding: 36px 0 0 37px;
  background: #111;
  border-top: 3px solid #0c0c0c;
}

.avatar {
  width: 118px;
  height: 118px;
  border-radius: 50%;
  background: #fff;
}

/* bottom */
.toolbar {
  box-sizing: border-box;
  display: flex;
  height: 136px;
  background: #1c1c1c;
  border-top: 1px solid #363636;
}

.index {
  box-sizing: border-box;
  width: 270px;
  display: flex;
  flex-direction: column;
  align-items: center;
  border-right: 1px solid #2c2c2c;
  font-size: 35.500px;
}

.up-caret {
  margin-top: 9px;
  border: 10px solid transparent;
  border-bottom: 7px solid #7c7c80;
  border-top: 0;
}

.index-value {
  margin-top: 15px;
  color: #dd0a0a;
  font-size: 39px;
  line-height: 46px;
}

.index-row {
  box-sizing: border-box;
  display: flex;
  justify-content: space-between;
  width: 100%;
  padding: 0 11px 0 38px;
  line-height: 55px;
}

.index-row .up {
  color: #dd0a0a;
  font-size: 36px;
}

.tool {
  flex: 1;
  display: flex;
  flex-direction: column;
  align-items: center;
  padding: 9px 1px 0 0;
  font-size: 35.500px;
  line-height: 50px;
}

.tool span {
  margin-top: 14px;
}

.system-nav {
  box-sizing: border-box;
  display: flex;
  align-items: center;
  justify-content: space-around;
  height: 132px;
  padding: 0 143px 0 164px;
  background: #fff;
}
</style>
